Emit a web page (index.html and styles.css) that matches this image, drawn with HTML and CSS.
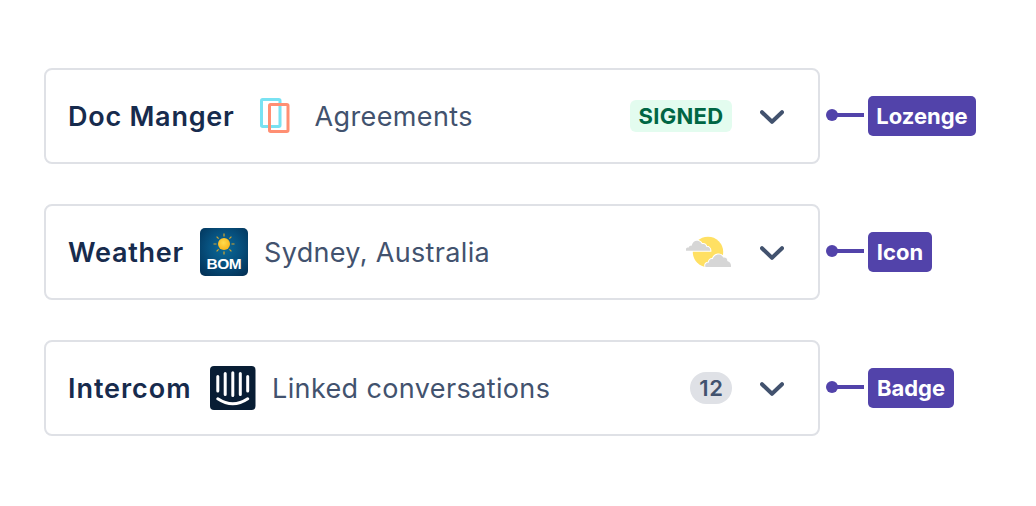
FILE: index.html
```
<!DOCTYPE html>
<html lang="en">
<head>
    <meta charset="UTF-8">
    <meta name="viewport" content="width=device-width, initial-scale=1.0">
    <title>Glance status types</title>
    <link rel="stylesheet" href="styles.css">
</head>
<body>
    <div class="row">
        <div class="panel">
            <h2 class="title title-doc">Doc Manger</h2>
            <svg class="icon icon-doc" width="30" height="36" viewBox="0 0 30 36" fill="none" stroke-width="3">
                <rect x="1.5" y="1.5" width="18.500" height="27" rx="1.2" stroke="#79e2f2"/>
                <rect x="9.5" y="6.5" width="18.500" height="27" rx="1.2" stroke="#ff8f73"/>
            </svg>
            <span class="label label-doc">Agreements</span>
            <span class="lozenge">SIGNED</span>
            <svg class="chevron" width="24" height="14" viewBox="0 0 24 14"><path d="M2 2.2l10 9.6 10-9.6"/></svg>
        </div>
        <svg class="pointer" width="38" height="12" viewBox="0 0 38 12"><circle cx="6" cy="6" r="6"/><path d="M6 4h32v4H6z"/></svg>
        <span class="tag tag-lozenge">Lozenge</span>
    </div>

    <div class="row">
        <div class="panel">
            <h2 class="title title-weather">Weather</h2>
            <svg class="icon icon-bom" width="48" height="48" viewBox="0 0 48 48">
                <defs>
                    <radialGradient id="sky" cx="0.5" cy="0.42" r="0.72">
                        <stop offset="0" stop-color="#0b6a98"/>
                        <stop offset="0.45" stop-color="#075280"/>
                        <stop offset="1" stop-color="#033156"/>
                    </radialGradient>
                    <radialGradient id="sun" cx="0.45" cy="0.4" r="0.6">
                        <stop offset="0" stop-color="#ffdc4e"/>
                        <stop offset="1" stop-color="#f9b51c"/>
                    </radialGradient>
                </defs>
                <rect width="48" height="48" rx="5" fill="url(#sky)"/>
                <path d="M24 5.5v3M24 23.500v3M13.500 16h3M31.500 16h3M16.600 8.600l2 2M29.400 21.400l2 2M31.400 8.600l-2 2M18.600 21.400l-2 2" stroke="#d5a52c" stroke-width="1.200"/>
                <circle cx="24" cy="16" r="6" fill="url(#sun)"/>
                <text class="bom-text" x="23.800" y="41" text-anchor="middle">BOM</text>
            </svg>
            <span class="label label-weather">Sydney, Australia</span>
            <svg class="status-icon" width="46" height="32" viewBox="0 0 46 32">
                <circle cx="22" cy="16" r="15.200" fill="#ffe063"/>
                <g fill="#d6d6d6" stroke="#fff" stroke-width="2" paint-order="stroke">
                    <path d="M0 14.800c-1-1.900.6-3.600 2.800-3.300.2-1.500 1.400-2 2.800-1.700C6.500 5.400 10 3.800 13 5.200c1.500.6 2.400 1.600 2.900 3 2.600-.8 4.400.6 4.300 2.700 2.600-.4 4.300 1.600 4.200 3.900z"/>
                    <path d="M19.500 31c-1-2.600.6-4.800 3.500-4.600-.3-2.400 1.600-3.700 3.700-3.200C28 18 35.300 16.700 37.200 21.500c2.700-.5 4.500 1.200 4 3.500 3 .6 4.300 3.500 3.700 6z"/>
                </g>
            </svg>
            <svg class="chevron" width="24" height="14" viewBox="0 0 24 14"><path d="M2 2.2l10 9.6 10-9.6"/></svg>
        </div>
        <svg class="pointer" width="38" height="12" viewBox="0 0 38 12"><circle cx="6" cy="6" r="6"/><path d="M6 4h32v4H6z"/></svg>
        <span class="tag tag-icon">Icon</span>
    </div>

    <div class="row">
        <div class="panel">
            <h2 class="title title-intercom">Intercom</h2>
            <svg class="icon icon-intercom" width="46" height="44" viewBox="0 0 46 44">
                <rect width="45.500" height="44" rx="4" fill="#081d34"/>
                <path d="M7.800 10.500v14.500M15.200 7.500v21M22.800 6.800v22.700M30.300 7.500v21M37.700 10.500v14.500M7.800 32.800q15 10 29.900 0" fill="none" stroke="#fff" stroke-width="3" stroke-linecap="round"/>
            </svg>
            <span class="label label-intercom">Linked conversations</span>
            <span class="badge">12</span>
            <svg class="chevron" width="24" height="14" viewBox="0 0 24 14"><path d="M2 2.2l10 9.6 10-9.6"/></svg>
        </div>
        <svg class="pointer" width="38" height="12" viewBox="0 0 38 12"><circle cx="6" cy="6" r="6"/><path d="M6 4h32v4H6z"/></svg>
        <span class="tag tag-badge">Badge</span>
    </div>
</body>
</html>
```
FILE: styles.css
```
* {
    box-sizing: border-box;
}
body {
    margin: 0;
    padding: 68px 44px 0;
    background: #fff;
    font-family: Inter, sans-serif;
    overflow: hidden;
}
.row {
    display: flex;
    align-items: center;
    height: 96px;
    margin-bottom: 40px;
}
.panel {
    display: flex;
    align-items: center;
    width: 776px;
    height: 96px;
    padding: 0 34px 0 22px;
    border: 2px solid #dfe1e6;
    border-radius: 8px;
    white-space: nowrap;
}
svg {
    display: block;
    flex: none;
}
.title {
    flex: none;
    margin: 0;
    padding-top: 1px;
    color: #172b4d;
    font-size: 27px;
    font-weight: 600;
    line-height: 40px;
    letter-spacing: 0.75px;
}
.title-doc {
    width: 192px;
}
.title-weather {
    width: 132px;
}
.title-intercom {
    width: 142px;
    letter-spacing: 0.95px;
}
.label {
    flex: 1;
    padding-top: 1px;
    color: #42526e;
    font-size: 27px;
    line-height: 40px;
    letter-spacing: 0.38px;
}
.label-doc {
    margin-left: 24.5px;
}
.label-weather {
    margin-left: 16px;
    letter-spacing: 0.34px;
}
.label-intercom {
    margin-left: 16px;
}
.lozenge {
    width: 102px;
    height: 32px;
    border-radius: 6px;
    background: #e3fcef;
    color: #006644;
    font-size: 22px;
    font-weight: 700;
    line-height: 33px;
    letter-spacing: 0.3px;
    text-align: center;
}
.badge {
    width: 42px;
    height: 32px;
    padding-left: 1px;
    border-radius: 16px;
    background: #dfe1e6;
    color: #42526e;
    font-size: 22px;
    font-weight: 600;
    line-height: 33px;
    letter-spacing: 0.8px;
    text-align: center;
}
.chevron {
    margin: 2px 0 0 28px;
    fill: none;
    stroke: #42526e;
    stroke-width: 4;
    stroke-linecap: round;
    stroke-linejoin: round;
}
.bom-text {
    fill: #fff;
    font-family: "Liberation Sans", Arial, sans-serif;
    font-size: 15.5px;
    font-weight: 700;
    letter-spacing: -0.6px;
}
.pointer {
    margin: -2px 4px 0 6px;
    fill: #5243aa;
}
.tag {
    height: 40px;
    border-radius: 5px;
    background: #5243aa;
    color: #fff;
    font-size: 22px;
    font-weight: 700;
    line-height: 40px;
    text-align: center;
}
.tag-lozenge {
    width: 108px;
}
.tag-icon {
    width: 64px;
}
.tag-badge {
    width: 86px;
}
```
